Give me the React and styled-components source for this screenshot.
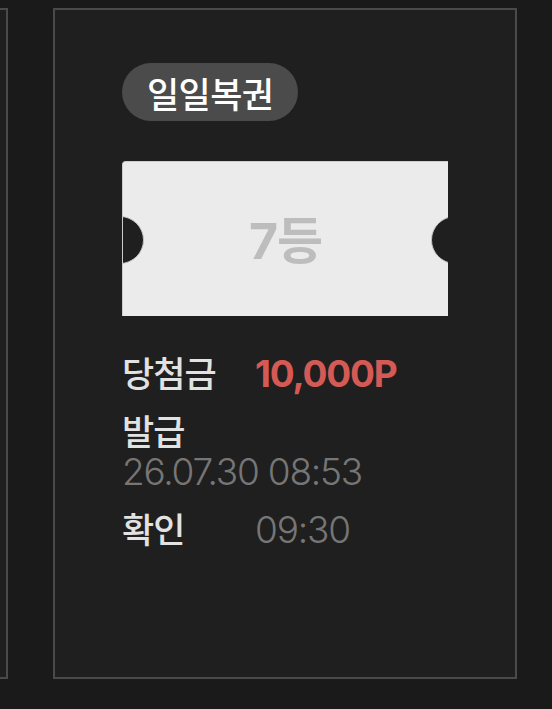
import React from 'react';
import styled, { createGlobalStyle } from 'styled-components';

const GlobalStyle = createGlobalStyle`
    html, body {
        margin: 0;
        padding: 0;
        background: #1a1a1a;
        overflow: hidden;
    }
    body {
        font-family: Inter, "Noto Sans CJK KR", sans-serif;
    }
`;

/* 가로로 늘어선 카드 목록 (첫 카드는 화면 왼쪽 밖으로 밀려 있음) */
const CardStrip = styled.div`
    display: flex;
    gap: 45px;
    padding-top: 8px;
    margin-left: -456px;
`;

const Card = styled.div`
    box-sizing: border-box;
    flex: 0 0 464px;
    height: 671px;
    border: 2px solid #4a4a4a;
    background: #1f1f1f;
    padding: 53px 67px 0 67px;
`;

const Badge = styled.div`
    display: inline-flex;
    align-items: center;
    height: 58px;
    padding: 0 25px;
    border-radius: 29px;
    background: #4b4b4b;
    color: #ffffff;
    font-size: 35px;
    font-weight: 500;
    letter-spacing: -0.6px;
`;

const Ticket = styled.div`
    position: relative;
    box-sizing: border-box;
    width: 326px;
    height: 155px;
    margin-top: 40px;
    background: #ebebeb;
    border-top: 1px solid #cdcdcd;
    border-left: 1px solid #cdcdcd;
    border-radius: 4px 0 0 0;
    overflow: hidden;
    display: flex;
    justify-content: center;
    align-items: center;
    color: #bdbdbd;
    font-size: 50px;
    font-weight: 700;
    letter-spacing: -1px;
    padding-bottom: 4px;

    &::before,
    &::after {
        content: '';
        position: absolute;
        top: 54px;
        width: 48px;
        height: 48px;
        border-radius: 50%;
        background: #1f1f1f;
        border: 1.5px solid #c2c2c2;
        box-sizing: border-box;
    }
    &::before {
        left: -27px;
    }
    &::after {
        right: -31px;
    }
`;

const Info = styled.div`
    margin-top: 38px;
`;

const Row = styled.div`
    display: flex;
    flex-wrap: wrap;
    align-items: baseline;
    margin-bottom: 18px;
    line-height: 40px;
`;

const Label = styled.span`
    flex: 0 0 133px;
    color: #e2e2e2;
    font-size: 35px;
    font-weight: 500;
    letter-spacing: -1px;
`;

const Value = styled.span`
    color: ${(p) => (p.$accent ? '#d35a55' : '#767676')};
    font-size: 37px;
    font-weight: ${(p) => (p.$accent ? 700 : 300)};
    letter-spacing: -1.2px;
    white-space: nowrap;
`;

const App = () => {
    return (
        <>
            <GlobalStyle />
            <CardStrip>
                <Card />
                <Card>
                    <Badge>일일복권</Badge>
                    <Ticket>7등</Ticket>
                    <Info>
                        <Row>
                            <Label>당첨금</Label>
                            <Value $accent>10,000P</Value>
                        </Row>
                        <Row>
                            <Label>발급</Label>
                            <Value>26.07.30 08:53</Value>
                        </Row>
                        <Row>
                            <Label>확인</Label>
                            <Value>09:30</Value>
                        </Row>
                    </Info>
                </Card>
            </CardStrip>
        </>
    );
};

export default App;
